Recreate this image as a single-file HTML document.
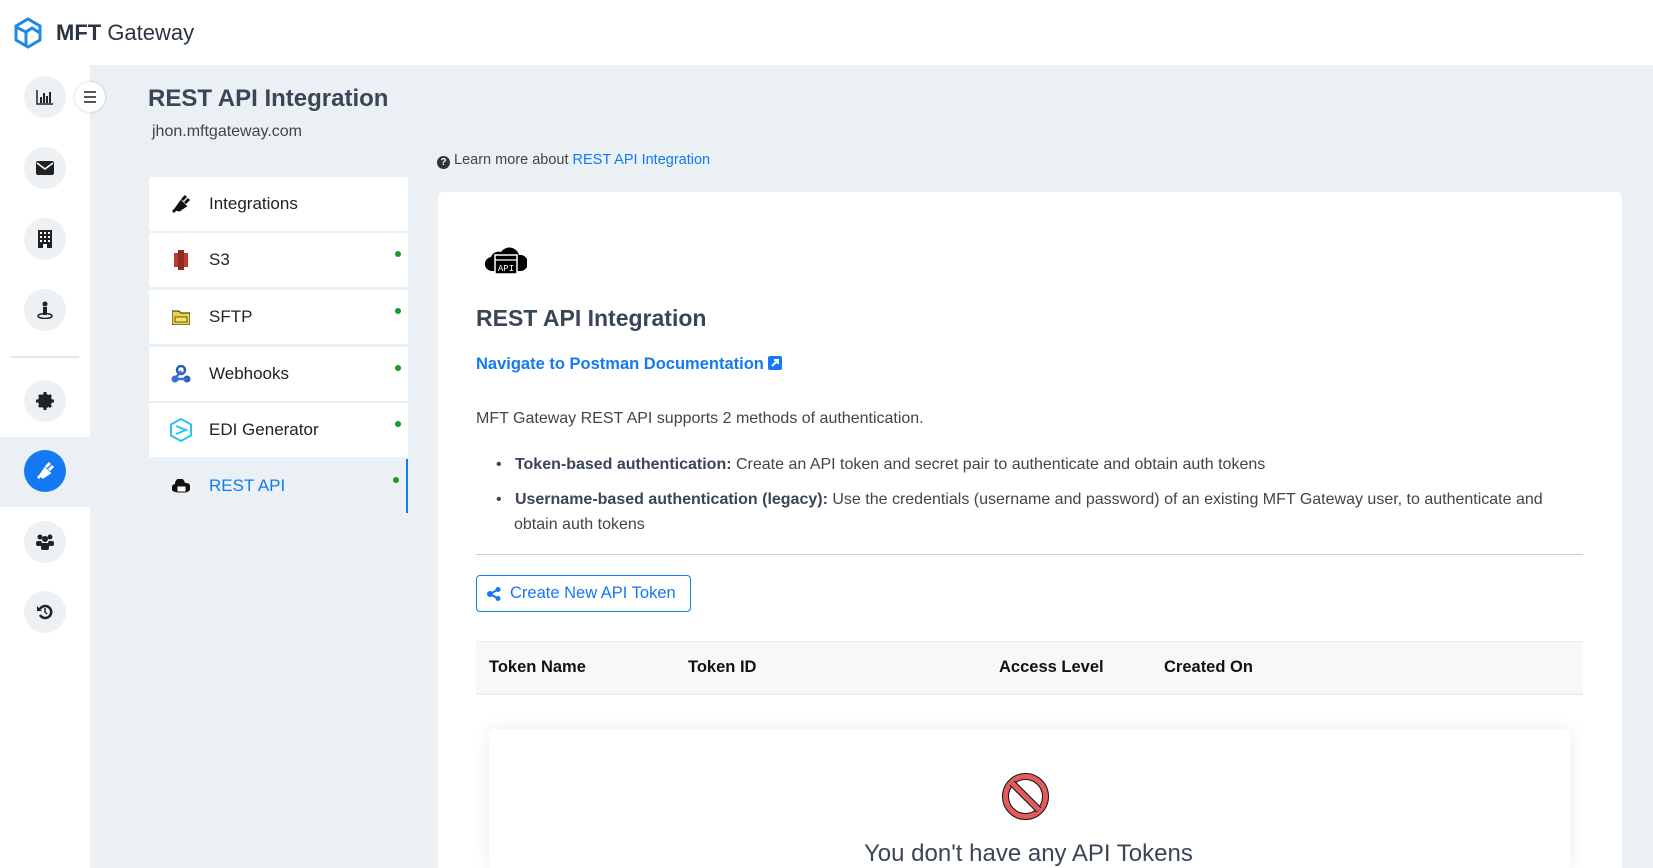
<!DOCTYPE html>
<html style="width:1653px;height:868px;overflow:hidden"><head><meta charset="utf-8"><style>
*{box-sizing:border-box;margin:0;padding:0}
body{width:1653px;height:868px;overflow:hidden;background:#eaf0f4;font-family:"Liberation Sans",sans-serif;color:#3a4656;position:relative}
.a{position:absolute}
.top{left:0;top:0;width:1653px;height:65px;background:#fff}
.side{left:0;top:65px;width:90px;height:803px;background:#fff}
.circ{position:absolute;left:24px;width:42px;height:42px;border-radius:50%;background:#edf1f4;display:flex;align-items:center;justify-content:center}
.item{position:absolute;left:149px;width:259px;height:54px;background:#fff;display:flex;align-items:center;font-size:17px;color:#222}
.item .ic{width:56px;display:flex;justify-content:center;margin-left:4px}
.dot{position:absolute;right:7px;top:18px;width:6px;height:6px;border-radius:50%;background:#1a9b2e}
</style></head><body>
<div class="a top"></div>
<svg class="a" style="left:13px;top:17px" width="30" height="32" viewBox="0 0 30 32"><path d="M15 2 L27 9 V23 L15 30 L3 23 V9 Z" fill="none" stroke="#1e88e5" stroke-width="3"/><path d="M3 10 L13 15 V29 M13 15 L19 11 L27 16" fill="none" stroke="#1e88e5" stroke-width="3"/></svg>
<div class="a" style="left:56px;top:20px;font-size:22px;color:#2b3440"><b>MFT</b> Gateway</div>
<div class="a side"></div>
<div class="a" style="left:0;top:437px;width:90px;height:70px;background:#eaf0f4"></div>
<div class="circ" style="top:76px"><svg width="18" height="16"><path d="M1 1V15H17" stroke="#222" fill="none" stroke-width="1.5"/><rect x="4" y="8" width="2" height="6" fill="#222"/><rect x="7" y="4" width="2" height="10" fill="#222"/><rect x="10" y="7" width="2" height="7" fill="#222"/><rect x="13" y="3" width="2" height="11" fill="#222"/></svg></div>
<div class="circ" style="top:147px"><svg width="18" height="14"><rect width="18" height="14" rx="2" fill="#222"/><path d="M1 2 L9 8 L17 2" stroke="#fff" fill="none" stroke-width="1.5"/></svg></div>
<div class="circ" style="top:218px"><svg width="14" height="18"><rect width="14" height="18" fill="#222"/><g fill="#fff"><rect x="2" y="2" width="2" height="2"/><rect x="6" y="2" width="2" height="2"/><rect x="10" y="2" width="2" height="2"/><rect x="2" y="6" width="2" height="2"/><rect x="6" y="6" width="2" height="2"/><rect x="10" y="6" width="2" height="2"/><rect x="2" y="10" width="2" height="2"/><rect x="6" y="10" width="2" height="2"/><rect x="10" y="10" width="2" height="2"/><rect x="5" y="14" width="4" height="4"/></g></svg></div>
<div class="circ" style="top:289px"><svg width="16" height="18"><circle cx="8" cy="3" r="2.5" fill="#222"/><rect x="6" y="6" width="4" height="8" fill="#222"/><ellipse cx="8" cy="15" rx="7" ry="2.5" fill="none" stroke="#222" stroke-width="1.5"/></svg></div>
<div class="a" style="left:11px;top:356px;width:68px;height:2px;background:#e3e9ee"></div>
<div class="circ" style="top:380px"><svg width="18" height="18"><circle cx="9" cy="9" r="7" fill="#222"/><g stroke="#222" stroke-width="3"><path d="M9 0V18M0 9H18M3 3L15 15M15 3L3 15"/></g></svg></div>
<div class="circ" style="top:450px;background:#1479f2"><svg width="20" height="20"><path d="M3 17 L7 13 M6 14 L10 8 L14 12 L8 16 Z M11 6 L15 2 M14 9 L18 5" stroke="#fff" stroke-width="3" fill="#fff"/></svg></div>
<div class="circ" style="top:521px"><svg width="20" height="16"><circle cx="5" cy="3" r="2.5" fill="#222"/><circle cx="15" cy="3" r="2.5" fill="#222"/><circle cx="10" cy="5" r="3" fill="#222"/><rect x="1" y="7" width="6" height="5" rx="2" fill="#222"/><rect x="13" y="7" width="6" height="5" rx="2" fill="#222"/><rect x="6" y="9" width="8" height="7" rx="2" fill="#222"/></svg></div>
<div class="circ" style="top:591px"><svg width="16" height="16"><path d="M3 5 A6 6 0 1 1 3 11" stroke="#222" stroke-width="2.5" fill="none"/><path d="M0 2 L5 7 L0 7Z" fill="#222"/><path d="M8 4V8L10 10" stroke="#222" stroke-width="1.5" fill="none"/></svg></div>
<div class="a" style="left:75px;top:82px;width:30px;height:30px;border-radius:50%;background:#fff;box-shadow:0 0 3px rgba(0,0,0,.2)"><svg width="30" height="30"><path d="M9 10H21M9 15H21M9 20H21" stroke="#555" stroke-width="2"/></svg></div>
<div class="a" style="left:148px;top:85px;font-size:24px;font-weight:bold;color:#3a4656">REST API Integration</div>
<div class="a" style="left:152px;top:123px;font-size:16px;color:#444">jhon.mftgateway.com</div>
<div class="item" style="top:177px"><span class="ic"><svg width="20" height="20"><path d="M2 18 L7 13 M5 15 L10 8 L14 12 L8 16 Z M11 6 L15 2 M14 9 L18 5" stroke="#111" stroke-width="3" fill="#111"/></svg></span>Integrations</div>
<div class="item" style="top:233px"><span class="ic"><svg width="18" height="20"><rect x="2" y="3" width="14" height="14" fill="#c0392b"/><rect x="6" y="0" width="6" height="20" fill="#8e2a1f"/></svg></span>S3<span class="dot"></span></div>
<div class="item" style="top:290px"><span class="ic"><svg width="18" height="16"><path d="M0 2H7L9 4H18V16H0Z" fill="#f2d43a" stroke="#222"/><rect x="3" y="8" width="12" height="5" fill="#f7e36a" stroke="#222" stroke-width=".7"/></svg></span>SFTP<span class="dot"></span></div>
<div class="item" style="top:347px"><span class="ic"><svg width="20" height="18"><circle cx="10" cy="5" r="4" fill="none" stroke="#2a5fb8" stroke-width="2.5"/><circle cx="4" cy="14" r="3.5" fill="#3b6fd0"/><circle cx="16" cy="14" r="3.5" fill="#2a5fb8"/><path d="M10 6L4 14H16" stroke="#3b6fd0" stroke-width="2.5" fill="none"/></svg></span>Webhooks<span class="dot"></span></div>
<div class="item" style="top:403px"><span class="ic"><svg width="22" height="24"><path d="M11 1L21 6.5V17.5L11 23L1 17.5V6.5Z" fill="none" stroke="#29c5f0" stroke-width="2"/><path d="M6 8L16 12L6 16" fill="none" stroke="#29c5f0" stroke-width="2"/></svg></span>EDI Generator<span class="dot"></span></div>
<div class="item" style="top:459px;background:transparent;color:#1479f2;border-right:2px solid #1479f2"><span class="ic"><svg width="18" height="14"><path d="M4 13A4 4 0 0 1 3 5A5 5 0 0 1 13 4A4 4 0 0 1 15 13Z" fill="#111"/><rect x="5" y="7" width="9" height="6" fill="#fff" stroke="#111"/></svg></span>REST API<span class="dot"></span></div>
<div class="a" style="left:437px;top:152px;font-size:14.5px;color:#444"><span style="display:inline-block;width:13px;height:13px;border-radius:50%;background:#333;color:#fff;font-size:10px;text-align:center;line-height:13px;font-weight:bold;vertical-align:-1px">?</span> Learn more about <span style="color:#1479f2">REST API Integration</span></div>
<div class="a" style="left:438px;top:192px;width:1184px;height:676px;background:#fff;border-radius:5px 5px 0 0"></div>
<svg class="a" style="left:485px;top:243px" width="42" height="32" viewBox="0 0 42 32"><path d="M8 28A7 7 0 0 1 6 14A8 8 0 0 1 16 9A10 10 0 0 1 34 12A8 8 0 0 1 36 28Z" fill="#000"/><rect x="10" y="12" width="22" height="19" fill="#000" stroke="#fff" stroke-width="1.5"/><path d="M10 17H32" stroke="#fff" stroke-width="1.2"/><text x="21" y="28" font-size="9" fill="#fff" text-anchor="middle" font-family="Liberation Mono">API</text></svg>
<div class="a" style="left:476px;top:305px;font-size:23px;font-weight:bold;color:#3a4656">REST API Integration</div>
<div class="a" style="left:476px;top:355px;font-size:16.5px;font-weight:bold;color:#1479f2">Navigate to Postman Documentation <span style="display:inline-block;width:14px;height:14px;background:#1479f2;border-radius:2px;vertical-align:-1px;position:relative"><svg width="14" height="14" style="position:absolute;left:0;top:0"><path d="M4 10L10 4M6 4H10V8" stroke="#fff" stroke-width="2" fill="none"/></svg></span></div>
<div class="a" style="left:476px;top:410px;font-size:16px;color:#444">MFT Gateway REST API supports 2 methods of authentication.</div>
<div class="a" style="left:496px;top:452px;font-size:16px;color:#444;width:1060px;line-height:25px">
<div style="padding-left:18px;text-indent:-18px">•&nbsp;&nbsp;&nbsp;<b style="color:#3a4656">Token-based authentication:</b> Create an API token and secret pair to authenticate and obtain auth tokens</div>
<div style="margin-top:10px;padding-left:18px;text-indent:-18px">•&nbsp;&nbsp;&nbsp;<b style="color:#3a4656">Username-based authentication (legacy):</b> Use the credentials (username and password) of an existing MFT Gateway user, to authenticate and obtain auth tokens</div></div>
<div class="a" style="left:476px;top:554px;width:1107px;height:1px;background:#ccc"></div>
<div class="a" style="left:476px;top:575px;width:215px;height:37px;border:1px solid #1479f2;border-radius:4px;color:#1479f2;font-size:16.5px;line-height:35px;padding-left:33px">Create New API Token<svg class="a" style="left:10px;top:11px" width="14" height="14"><circle cx="11" cy="2.5" r="2.5" fill="#1479f2"/><circle cx="3" cy="7" r="3" fill="#1479f2"/><circle cx="11" cy="11.5" r="2.5" fill="#1479f2"/><path d="M3 7L11 2.5M3 7L11 11.5" stroke="#1479f2" stroke-width="2"/></svg></div>
<div class="a" style="left:476px;top:641px;width:1107px;height:54px;background:#f7f8fa;border-top:1px solid #eceef1;border-bottom:2px solid #eceef1;font-size:16.5px;font-weight:bold;color:#111">
<span class="a" style="left:13px;top:16px">Token Name</span><span class="a" style="left:212px;top:16px">Token ID</span><span class="a" style="left:523px;top:16px">Access Level</span><span class="a" style="left:688px;top:16px">Created On</span></div>
<div class="a" style="left:489px;top:729px;width:1081px;height:139px;background:#fff;border-radius:5px 5px 0 0;box-shadow:0 0 18px rgba(0,0,0,.08)"></div>
<svg class="a" style="left:1002px;top:773px" width="47" height="47"><circle cx="23.5" cy="23.5" r="20" fill="none" stroke="#111" stroke-width="7"/><circle cx="23.5" cy="23.5" r="20" fill="none" stroke="#e25c5c" stroke-width="5"/><path d="M10 10L37 37" stroke="#111" stroke-width="7"/><path d="M10 10L37 37" stroke="#e25c5c" stroke-width="5"/></svg>
<div class="a" style="left:864px;top:840px;font-size:24px;color:#3a4656;white-space:nowrap">You don't have any API Tokens</div>
</body></html>
